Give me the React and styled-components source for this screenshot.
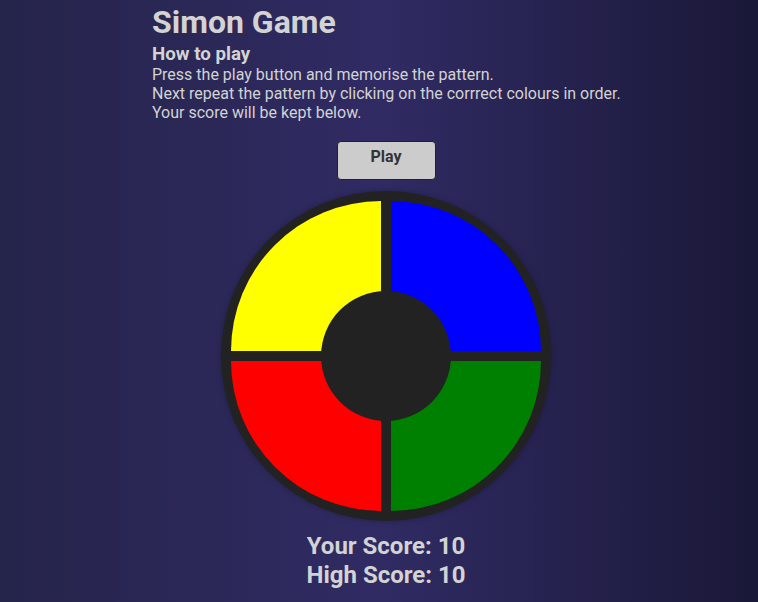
import React, { useState } from "react";
import styled, { createGlobalStyle } from "styled-components";

const GlobalStyle = createGlobalStyle`
    html, body {
        margin: 0;
        padding: 0;
        height: 100%;
    }
    body {
        background: linear-gradient(to right, #25244a, #302b63 50%, #1a1838);
        font-family: Roboto, "Noto Sans", sans-serif;
        color: lightgray;
    }
`;

const colours = {
    yellow: { bg: "#ffff00", corner: "top-left" },
    blue: { bg: "#0000ff", corner: "top-right" },
    red: { bg: "#ff0000", corner: "bottom-left" },
    green: { bg: "#008000", corner: "bottom-right" },
};

const App = () => {
    const [score] = useState(10);
    const [highScore] = useState(10);

    return (
        <>
            <GlobalStyle />
            <Page>
                <Title>Simon Game</Title>
                <Subtitle>How to play</Subtitle>
                <Instructions>
                    Press the play button and memorise the pattern.
                    <br />
                    Next repeat the pattern by clicking on the corrrect colours in order.
                    <br />
                    Your score will be kept below.
                </Instructions>
                <PlayButton>Play</PlayButton>
                <Board>
                    {["yellow", "blue", "red", "green"].map((c) => (
                        <Pad key={c} $bg={colours[c].bg} $corner={colours[c].corner} />
                    ))}
                    <Hub />
                </Board>
                <Scores>
                    <div>Your Score: {score}</div>
                    <div>High Score: {highScore}</div>
                </Scores>
            </Page>
        </>
    );
};

export default App;

const Page = styled.div`
    width: 468px;
    margin-left: 152px;
    padding-top: 3px;
    display: flex;
    flex-direction: column;
`;

const Title = styled.h1`
    margin: 0;
    font-size: 32px;
    font-weight: 700;
`;

const Subtitle = styled.h3`
    margin: 2px 0 0;
    font-size: 18.72px;
    font-weight: 700;
`;

const Instructions = styled.p`
    margin: 0;
    font-size: 16px;
    white-space: nowrap;
`;

const PlayButton = styled.button`
    align-self: center;
    margin-top: 19px;
    width: 99px;
    height: 39px;
    background: #cccccc;
    border: 1px solid #222;
    border-radius: 4px;
    font-family: Roboto, sans-serif;
    font-size: 16px;
    font-weight: 700;
    color: #333;
    padding-bottom: 10px;
    cursor: pointer;
`;

const Board = styled.div`
    position: relative;
    align-self: center;
    margin-top: 11px;
    width: 330px;
    height: 330px;
    box-sizing: border-box;
    padding: 10px;
    border-radius: 50%;
    background: #222;
    display: grid;
    grid-template-columns: 150px 150px;
    grid-template-rows: 150px 150px;
    gap: 10px;
    box-shadow: 0 0 6px rgba(0, 0, 0, 0.25);
`;

const Pad = styled.div`
    background: ${(p) => p.$bg};
    border-${(p) => p.$corner}-radius: 155px;
    cursor: pointer;
`;

const Hub = styled.div`
    position: absolute;
    left: 100px;
    top: 100px;
    width: 130px;
    height: 130px;
    border-radius: 50%;
    background: #222;
`;

const Scores = styled.div`
    align-self: center;
    margin-top: 11px;
    text-align: center;
    font-size: 24px;
    font-weight: 700;
    line-height: 29px;
`;
